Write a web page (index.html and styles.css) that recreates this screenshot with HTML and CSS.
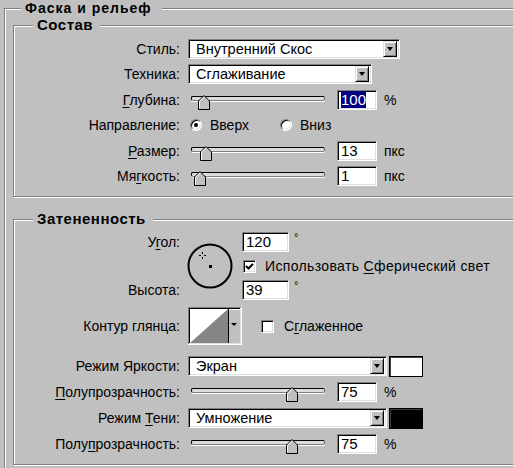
FILE: index.html
```html
<!DOCTYPE html>
<html lang="ru">
<head>
    <meta charset="UTF-8">
    <title>Фаска и рельеф</title>
    <link rel="stylesheet" href="styles.css">
</head>
<body>

<fieldset class="group group-main">
    <legend>Фаска и рельеф</legend>

    <fieldset class="group group-inner">
        <legend>Состав</legend>
        <div class="rows rows-structure">
            <div class="row">
                <span class="label">Стиль:</span>
                <div class="select select-style sunken"><span>Внутренний Скос</span><span class="drop"></span></div>
            </div>
            <div class="row">
                <span class="label">Техника:</span>
                <div class="select select-tech sunken"><span>Сглаживание</span><span class="drop"></span></div>
            </div>
            <div class="row">
                <span class="label"><u>Г</u>лубина:</span>
                <div class="slider">
                    <div class="track"></div>
                    <svg class="thumb" style="left: 7px" width="12" height="15" viewBox="0 0 12 15"><polygon points="6,0.5 11.5,6 11.5,14.5 0.5,14.5 0.5,6" fill="#c0c0c0" stroke="#000"/><polyline points="1.5,13.5 1.5,6.4 6,1.9" fill="none" stroke="#fff"/></svg>
                </div>
                <span class="field sunken"><span class="selected">100</span></span>
                <span class="unit">%</span>
            </div>
            <div class="row">
                <span class="label">Направление:</span>
                <span class="option option-first"><span class="radio on"></span>Вверх</span>
                <span class="option"><span class="radio"></span>Вниз</span>
            </div>
            <div class="row">
                <span class="label"><u>Р</u>азмер:</span>
                <div class="slider">
                    <div class="track"></div>
                    <svg class="thumb" style="left: 9px" width="12" height="15" viewBox="0 0 12 15"><polygon points="6,0.5 11.5,6 11.5,14.5 0.5,14.5 0.5,6" fill="#c0c0c0" stroke="#000"/><polyline points="1.5,13.5 1.5,6.4 6,1.9" fill="none" stroke="#fff"/></svg>
                </div>
                <span class="field sunken">13</span>
                <span class="unit">пкс</span>
            </div>
            <div class="row">
                <span class="label">Мя<u>г</u>кость:</span>
                <div class="slider">
                    <div class="track"></div>
                    <svg class="thumb" style="left: 3px" width="12" height="15" viewBox="0 0 12 15"><polygon points="6,0.5 11.5,6 11.5,14.5 0.5,14.5 0.5,6" fill="#c0c0c0" stroke="#000"/><polyline points="1.5,13.5 1.5,6.4 6,1.9" fill="none" stroke="#fff"/></svg>
                </div>
                <span class="field sunken">1</span>
                <span class="unit">пкс</span>
            </div>
        </div>
    </fieldset>

    <fieldset class="group group-inner group-shading">
        <legend>Затененность</legend>

        <div class="angle-block">
            <span class="label label-angle">У<u>г</u>ол:</span>
            <span class="label label-altitude">Высота:</span>
            <div class="dial">
                <svg width="46" height="46" viewBox="0 0 46 46">
                    <circle cx="23" cy="23" r="21.5" fill="none" stroke="#000" stroke-width="2"/>
                    <rect x="22" y="22" width="3" height="3" fill="#000"/>
                    <rect x="15" y="9" width="1" height="2" fill="#000"/>
                    <rect x="15" y="14" width="1" height="2" fill="#000"/>
                    <rect x="12" y="12" width="2" height="1" fill="#000"/>
                    <rect x="17" y="12" width="2" height="1" fill="#000"/>
                </svg>
            </div>
            <div class="angle-line angle-top"><span class="field field-angle sunken">120</span><span class="deg">°</span></div>
            <div class="angle-line angle-check">
                <span class="checkbox sunken"><svg width="9" height="9" viewBox="0 0 9 9"><polyline points="1,4 3.5,6.5 8,2" fill="none" stroke="#000" stroke-width="2"/></svg></span>
                <span class="check-text">Использовать <u>С</u>ферический свет</span>
            </div>
            <div class="angle-line angle-bottom"><span class="field field-angle sunken">39</span><span class="deg">°</span></div>
        </div>

        <div class="row row-contour">
            <span class="label">Контур глянца:</span>
            <svg class="contour" width="54" height="38" viewBox="0 0 54 38">
                <rect width="54" height="38" fill="#fff"/>
                <path d="M0 0H53V1H1V37H0Z" fill="#808080"/>
                <path d="M1 1H52V2H2V36H1Z" fill="#000"/>
                <rect x="2" y="36" width="51" height="1" fill="#dfdfdf"/>
                <rect x="52" y="2" width="1" height="35" fill="#dfdfdf"/>
                <rect x="2" y="2" width="38" height="34" fill="#fff"/>
                <polygon points="2,36 40,2 40,36" fill="#858585"/>
                <rect x="40" y="2" width="12" height="34" fill="#c0c0c0"/>
                <rect x="40" y="2" width="1" height="34" fill="#000"/>
                <rect x="41" y="2" width="11" height="1" fill="#fff"/>
                <polygon points="43,16 49,16 46,19" fill="#000"/>
            </svg>
            <span class="checkbox checkbox-smooth sunken"></span>
            <span>С<u>г</u>лаженное</span>
        </div>

        <div class="rows rows-shading">
            <div class="row">
                <span class="label">Режим Яркости:</span>
                <div class="select select-mode sunken"><span>Экран</span><span class="drop"></span></div>
                <span class="swatch swatch-white"></span>
            </div>
            <div class="row">
                <span class="label"><u>П</u>олупрозрачность:</span>
                <div class="slider">
                    <div class="track"></div>
                    <svg class="thumb" style="left: 95px" width="12" height="15" viewBox="0 0 12 15"><polygon points="6,0.5 11.5,6 11.5,14.5 0.5,14.5 0.5,6" fill="#c0c0c0" stroke="#000"/><polyline points="1.5,13.5 1.5,6.4 6,1.9" fill="none" stroke="#fff"/></svg>
                </div>
                <span class="field sunken">75</span>
                <span class="unit">%</span>
            </div>
            <div class="row">
                <span class="label">Режим <u>Т</u>ени:</span>
                <div class="select select-mode sunken"><span>Умножение</span><span class="drop"></span></div>
                <span class="swatch swatch-black"></span>
            </div>
            <div class="row">
                <span class="label">Полу<u>п</u>розрачность:</span>
                <div class="slider">
                    <div class="track"></div>
                    <svg class="thumb" style="left: 95px" width="12" height="15" viewBox="0 0 12 15"><polygon points="6,0.5 11.5,6 11.5,14.5 0.5,14.5 0.5,6" fill="#c0c0c0" stroke="#000"/><polyline points="1.5,13.5 1.5,6.4 6,1.9" fill="none" stroke="#fff"/></svg>
                </div>
                <span class="field sunken">75</span>
                <span class="unit">%</span>
            </div>
        </div>
    </fieldset>
</fieldset>

</body>
</html>
```

FILE: styles.css
```css
* {
    box-sizing: border-box;
}
html, body {
    margin: 0;
    overflow: hidden;
}
body {
    width: 513px;
    height: 468px;
    padding-top: 1px;
    background: #c0c0c0;
    font-family: "Liberation Sans", Arial, sans-serif;
    font-size: 14px;
    color: #000;
}
u {
    text-decoration-thickness: 1px;
    text-underline-offset: 2px;
}

/* etched group boxes */
.group {
    margin: 0;
    border: 1px solid #808080;
    box-shadow: inset 1px 1px 0 #fff, 1px 1px 0 #fff;
}
.group legend {
    background: #c0c0c0;
    font-weight: bold;
    font-size: 15px;
    letter-spacing: 0.5px;
    line-height: 16px;
    padding: 0 7px 0 4px;
}
.group-main {
    width: 620px;
    margin-left: 4px;
    padding: 2px 0 20px 8px;
}
.group-main > legend {
    font-size: 14px;
    letter-spacing: 1px;
    line-height: 14px;
    margin-left: 8px;
    padding-right: 10px;
}
.group-inner {
    padding: 3px 0 7px 0;
}
.group-inner > legend {
    margin-left: 19px;
}
.group-shading {
    margin-top: 14px;
    padding: 3px 0 7px 0;
}

/* rows */
.row {
    display: flex;
    align-items: center;
    height: 25.5px;
}
.rows-shading .row {
    height: 26px;
}
.label {
    flex: none;
    width: 166px;
    margin-right: 8px;
    text-align: right;
}

/* sunken 3d border */
.sunken {
    background: #fff;
    border: 1px solid;
    border-color: #808080 #fff #fff #808080;
    box-shadow: inset 1px 1px 0 #000, inset -1px -1px 0 #dfdfdf;
}

.select {
    display: flex;
    align-items: center;
    justify-content: space-between;
    height: 20px;
    padding: 2px 2px 2px 7px;
    font-size: 14.5px;
}
.select-style {
    width: 212px;
}
.select-tech {
    width: 184px;
}
.select-mode {
    width: 199px;
}
.drop {
    position: relative;
    width: 14px;
    height: 16px;
    background: #c0c0c0;
    border: 1px solid;
    border-color: #dfdfdf #000 #000 #dfdfdf;
    box-shadow: inset 1px 1px 0 #fff, inset -1px -1px 0 #808080;
}
.drop::after {
    content: "";
    position: absolute;
    left: 3px;
    top: 5px;
    border-left: 3px solid transparent;
    border-right: 3px solid transparent;
    border-top: 4px solid #000;
}

.slider {
    position: relative;
    flex: none;
    width: 134px;
    height: 20px;
    margin-left: 3px;
}
.track {
    margin-top: 6px;
    height: 5px;
    background: #dcdcdc;
    border: 1px solid #000;
    border-right-color: #606060;
    border-bottom-color: #808080;
    border-radius: 2px;
    box-shadow: 0 1px 0 #fff;
}
.thumb {
    position: absolute;
    top: 5px;
}

.field {
    flex: none;
    width: 40px;
    height: 20px;
    margin-left: 12px;
    padding-left: 3px;
    font-size: 15px;
    line-height: 18px;
}
.selected {
    background: #000080;
    color: #fff;
}
.unit {
    margin-left: 7px;
}

.option {
    display: flex;
    align-items: center;
    gap: 8px;
}
.option-first {
    width: 90px;
    margin-left: 2px;
}
.radio {
    position: relative;
    width: 12px;
    height: 12px;
    border-radius: 50%;
    background: #fff;
    border: 1px solid;
    border-color: #808080 #fff #fff #808080;
    box-shadow: inset 1px 1px 0 #000, inset -1px -1px 0 #dfdfdf;
}
.radio.on::after {
    content: "";
    position: absolute;
    left: 3px;
    top: 3px;
    width: 4px;
    height: 4px;
    border-radius: 50%;
    background: #000;
}

/* angle / altitude block */
.angle-block {
    display: grid;
    grid-template-columns: 174px 54px 1fr;
    grid-template-rows: 24px 24px 24px;
    align-items: center;
}
.angle-block .label {
    margin-right: 0;
    padding-right: 8px;
    width: auto;
}
.label-angle {
    grid-row: 1;
    grid-column: 1;
}
.label-altitude {
    grid-row: 3;
    grid-column: 1;
}
.dial {
    grid-row: 1 / 4;
    grid-column: 2;
    display: flex;
    margin-left: -1px;
}
.angle-line {
    grid-column: 3;
    display: flex;
    align-items: center;
}
.angle-top {
    grid-row: 1;
}
.angle-check {
    grid-row: 2;
    gap: 9px;
}
.check-text {
    letter-spacing: 0.35px;
}
.angle-bottom {
    grid-row: 3;
}
.field-angle {
    width: 47px;
    margin-left: 0;
}
.deg {
    align-self: flex-start;
    margin-left: 5px;
    font-size: 11px;
    line-height: 10px;
}
.checkbox {
    display: flex;
    align-items: center;
    justify-content: center;
    width: 13px;
    height: 13px;
    margin-left: 1px;
}

.row-contour {
    height: 38px;
    margin: 5px 0 8px;
}
.contour {
    flex: none;
}
.checkbox-smooth {
    margin: 0 10px 0 19px;
}

.swatch {
    width: 34px;
    height: 21px;
    margin-left: 2px;
    border: 1px solid #000;
    box-shadow: inset 1px 1px 0 #404040;
}
.swatch-white {
    background: #fff;
}
.swatch-black {
    background: #000;
}
```
